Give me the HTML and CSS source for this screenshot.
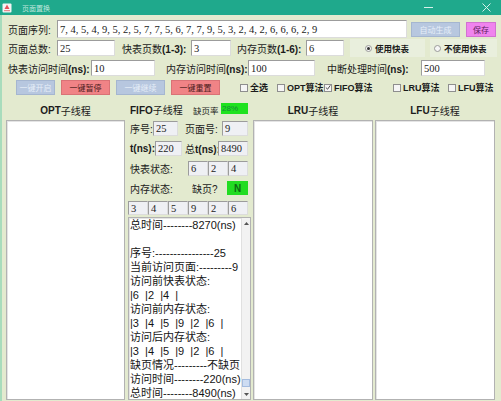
FILE: index.html
```html
<!DOCTYPE html>
<html lang="zh">
<head>
<meta charset="utf-8">
<title>页面置换</title>
<link rel="stylesheet" href="styles.css">
</head>
<body>
<div class="window">
  <div class="titlebar">
    <svg class="app-icon" width="10" height="10" viewBox="0 0 10 10">
      <rect x="0.5" y="0.5" width="9" height="9" rx="1" fill="#f4f4f4"/>
      <path d="M5 1.5 L7.5 6 L2.5 6 Z" fill="#e4505a"/>
      <rect x="2" y="7" width="6" height="1.2" fill="#e88a90"/>
    </svg>
    <span class="title">页面置换</span>
    <svg class="tb-min" width="9" height="9" viewBox="0 0 9 9"><path d="M0 4.5 H9" stroke="#d6f0ea" stroke-width="1"/></svg>
    <svg class="tb-close" width="9" height="9" viewBox="0 0 9 9"><path d="M0.5 0.5 L8.5 8.5 M8.5 0.5 L0.5 8.5" stroke="#d6f0ea" stroke-width="1"/></svg>
  </div>

  <div class="content">
    <div class="row r1">
      <span class="lbl w49">页面序列:</span>
      <div class="field w350">7, 4, 5, 4, 9, 5, 2, 5, 7, 7, 5, 6, 7, 7, 9, 5, 3, 2, 4, 2, 6, 6, 6, 2, 9</div>
      <div class="btn btn-dis ml4 w49 h15">自动生成</div>
      <div class="btn btn-save ml6 w30 h15">保存</div>
    </div>

    <div class="row r2">
      <span class="lbl w49">页面总数:</span>
      <div class="field w58">25</div>
      <span class="lbl ml7 w69">快表页数<span class="lat">(1-3):</span></span>
      <div class="field w40">3</div>
      <span class="lbl ml6 w69">内存页数<span class="lat">(1-6):</span></span>
      <div class="field w38">6</div>
      <div class="radio ml6 w75"><span class="dot on"></span>使用快表</div>
      <div class="radio radio2 ml5 w67"><span class="dot"></span>不使用快表</div>
    </div>

    <div class="row r3">
      <span class="lbl w83">快表访问时间<span class="lat">(ns):</span></span>
      <div class="field w64">10</div>
      <span class="lbl ml11 w82">内存访问时间<span class="lat">(ns):</span></span>
      <div class="field w67">100</div>
      <span class="lbl ml12 w94">中断处理时间<span class="lat">(ns):</span></span>
      <div class="field w64">500</div>
    </div>

    <div class="row r4">
      <div class="btn btn-dis ml8 w39">一键开启</div>
      <div class="btn btn-red ml6 w49">一键暂停</div>
      <div class="btn btn-dis ml6 w49">一键继续</div>
      <div class="btn btn-red ml6 w49">一键重置</div>
      <div class="chk ml20 w37"><span class="box"></span>全选</div>
      <div class="chk w47"><span class="box"></span>OPT算法</div>
      <div class="chk w69"><span class="box checked"><svg width="7" height="7" viewBox="0 0 7 7"><path d="M1 3.5 L3 5.5 L6.2 1" fill="none" stroke="#333" stroke-width="1"/></svg></span>FIFO算法</div>
      <div class="chk w55"><span class="box"></span>LRU算法</div>
      <div class="chk"><span class="box"></span>LFU算法</div>
    </div>

    <div class="cols">
      <div class="col">
        <div class="col-head"><span class="lat">OPT</span>子线程</div>
        <div class="ta"></div>
      </div>

      <div class="col fifo">
        <div class="fifo-head">
          <span class="lbl w63"><span class="lat">FIFO</span>子线程</span>
          <span class="lbl small w28">缺页率</span>
          <span class="rate">28%</span>
        </div>
        <div class="frow fa">
          <span class="lbl w23">序号:</span>
          <div class="field gray w25">25</div>
          <span class="lbl ml7 w37">页面号:</span>
          <div class="field gray w26">9</div>
        </div>
        <div class="frow fb">
          <span class="lbl w25"><span class="lat">t(ns):</span></span>
          <div class="field gray w27">220</div>
          <span class="lbl ml3 w33">总<span class="lat">t(ns):</span></span>
          <div class="field gray w30">8490</div>
        </div>
        <div class="frow fc">
          <span class="lbl w58">快表状态:</span>
          <div class="cell">6</div><div class="cell">2</div><div class="cell">4</div>
        </div>
        <div class="frow fd">
          <span class="lbl w62">内存状态:</span>
          <span class="lbl w35">缺页?</span>
          <span class="miss">N</span>
        </div>
        <div class="frow fe">
          <div class="cell">3</div><div class="cell">4</div><div class="cell">5</div><div class="cell">9</div><div class="cell">2</div><div class="cell">6</div>
        </div>
        <div class="ta log-ta">
          <div class="log">总时间--------8270(ns)

序号:----------------25
当前访问页面:---------9
访问前快表状态:
|6  |2  |4  |
访问前内存状态:
|3  |4  |5  |9  |2  |6  |
访问后内存状态:
|3  |4  |5  |9  |2  |6  |
缺页情况---------不缺页
访问时间--------220(ns)
总时间--------8490(ns)</div>
          <div class="sb">
            <div class="sb-btn"><svg width="5" height="3" viewBox="0 0 5 3"><path d="M0 3 L2.5 0 L5 3 Z" fill="#555"/></svg></div>
            <div class="sb-track"><div class="sb-thumb"></div></div>
            <div class="sb-btn down"><svg width="5" height="3" viewBox="0 0 5 3"><path d="M0 0 L2.5 3 L5 0 Z" fill="#555"/></svg></div>
          </div>
        </div>
      </div>

      <div class="col">
        <div class="col-head"><span class="lat">LRU</span>子线程</div>
        <div class="ta"></div>
      </div>

      <div class="col">
        <div class="col-head"><span class="lat">LFU</span>子线程</div>
        <div class="ta"></div>
      </div>
    </div>
  </div>
</div>
</body>
</html>
```

FILE: styles.css
```css
* { box-sizing: border-box; }
html, body { margin: 0; padding: 0; }
body {
  width: 501px;
  height: 401px;
  overflow: hidden;
  background: #e3eacf;
  font-family: "Liberation Sans", "Noto Sans CJK SC", sans-serif;
  color: #1b1b1b;
}
.window {
  width: 501px;
  height: 401px;
  display: flex;
  flex-direction: column;
  background: #e3eacf;
  overflow: hidden;
}

/* title bar */
.titlebar {
  height: 15px;
  flex: none;
  background: #1fa98c;
  display: flex;
  align-items: center;
}
.app-icon { margin-left: 2px; flex: none; }
.title {
  margin-left: 10px;
  font-size: 7px;
  color: #bfe6dc;
  font-family: "Noto Sans CJK SC", sans-serif;
  flex: 1;
}
.tb-min { margin-right: 49px; }
.tb-close { margin-right: 10px; }

.content {
  flex: 1;
  display: flex;
  flex-direction: column;
  box-shadow: inset 2px 0 0 #a8dcbc;
}

/* generic rows */
.row { display: flex; align-items: center; padding-left: 8px; flex: none; }
.r1 { margin-top: 5px; height: 18px; }
.r2 { margin-top: 2px; height: 16px; }
.r3 { margin-top: 4px; height: 16px; }
.r4 { margin-top: 4px; height: 15px; padding-left: 8px; }

.lbl {
  font-size: 10px;
  white-space: nowrap;
  flex: none;
  color: #1b1b1b;
}
.lat { font-family: "Liberation Sans", sans-serif; font-weight: bold; font-size: 10px; }
.lbl.small { font-size: 8.5px; }

.field {
  height: 100%;
  flex: none;
  background: #fff;
  border: 1px solid;
  border-color: #9c9c9c #dcdcdc #dcdcdc #9c9c9c;
  font-family: "Liberation Serif", serif;
  font-size: 10.5px;
  color: #222;
  padding-left: 2px;
  display: flex;
  align-items: center;
  white-space: nowrap;
  overflow: hidden;
}
.field.gray { background: #eff0f4; }

.btn {
  height: 15px;
  flex: none;
  font-family: "Noto Sans CJK SC", sans-serif;
  font-size: 8px;
  display: flex;
  align-items: center;
  justify-content: center;
  border: 1px solid;
}
.h15 { height: 15px; }
.btn-dis { background: #b7c7df; border-color: #a5b6d0; color: #e6eef8; }
.btn-red { background: #f08386; border-color: #d97276; color: #4c1b1b; }
.btn-save { background: #f083ee; border-color: #d272d2; color: #5c215c; }

.radio {
  height: 18px;
  flex: none;
  background: #e9efdd;
  display: flex;
  align-items: center;
  font-size: 8.5px;
  font-weight: bold;
  padding-left: 15px;
  white-space: nowrap;
}
.radio2 { padding-left: 4px; }
.dot {
  width: 7px;
  height: 7px;
  border-radius: 50%;
  border: 1px solid #9a9a9a;
  background: #f6f6f6;
  margin-right: 3px;
  display: flex;
  align-items: center;
  justify-content: center;
}
.dot.on::after {
  content: "";
  width: 3px;
  height: 3px;
  border-radius: 50%;
  background: #333;
}

.chk {
  display: flex;
  align-items: center;
  font-size: 9px;
  font-weight: bold;
  white-space: nowrap;
  flex: none;
}
.box {
  width: 8px;
  height: 8px;
  border: 1px solid #8e8e8e;
  background: #f5f5f5;
  margin-right: 2px;
  display: flex;
  align-items: center;
  justify-content: center;
}

/* widths / margins */
.w23 { width: 23px; } .w25 { width: 25px; } .w26 { width: 26px; } .w27 { width: 27px; }
.w28 { width: 28px; } .w30 { width: 30px; } .w33 { width: 33px; } .w35 { width: 35px; }
.w37 { width: 37px; } .w38 { width: 38px; } .w39 { width: 39px; } .w40 { width: 40px; }
.w47 { width: 47px; } .w49 { width: 49px; } .w55 { width: 55px; } .w58 { width: 58px; }
.w62 { width: 62px; } .w63 { width: 63px; } .w64 { width: 64px; } .w67 { width: 67px; }
.w69 { width: 69px; } .w75 { width: 75px; } .w82 { width: 82px; } .w83 { width: 83px; }
.w94 { width: 94px; } .w350 { width: 350px; }
.ml3 { margin-left: 3px; } .ml4 { margin-left: 4px; } .ml5 { margin-left: 5px; }
.ml6 { margin-left: 6px; } .ml7 { margin-left: 7px; } .ml8 { margin-left: 8px; }
.ml11 { margin-left: 11px; } .ml12 { margin-left: 12px; } .ml20 { margin-left: 20px; }

/* columns */
.cols {
  margin-top: 3px;
  height: 302px;
  flex: none;
  display: grid;
  grid-template-columns: 119px 124px 120px 120px;
  column-gap: 2px;
  padding-left: 6px;
}
.col { display: flex; flex-direction: column; min-height: 0; }
.col-head {
  height: 22px;
  flex: none;
  padding-top: 3px;
  display: flex;
  align-items: center;
  justify-content: center;
  font-size: 10px;
  white-space: nowrap;
}
.ta {
  flex: 1;
  background: #fff;
  border: 1px solid #b2b2b2;
  box-shadow: inset 1px 1px 0 #e4e4e4;
}

/* FIFO column */
.fifo-head {
  height: 22px;
  flex: none;
  display: flex;
  align-items: center;
  padding-left: 3px;
  padding-top: 1px;
}
.rate {
  width: 27px;
  height: 11px;
  background: #1fe21f;
  color: #178a3a;
  font-size: 8px;
  display: flex;
  align-items: center;
  padding-left: 1px;
  margin-bottom: 2px;
}
.frow { display: flex; align-items: center; padding-left: 3px; flex: none; }
.fa { margin-top: 1px; height: 15px; }
.fb { margin-top: 5px; height: 15px; }
.fc { margin-top: 5px; height: 15px; }
.fd { margin-top: 5px; height: 14px; }
.fe { margin-top: 6px; height: 14px; padding-left: 1px; }
.cell {
  width: 20px;
  height: 100%;
  flex: none;
  background: #eff0f4;
  border: 1px solid;
  border-color: #9c9c9c #dcdcdc #dcdcdc #9c9c9c;
  font-family: "Liberation Serif", serif;
  font-size: 10.5px;
  color: #222;
  padding-left: 2px;
  display: flex;
  align-items: center;
}
.miss {
  width: 21px;
  height: 100%;
  background: #22dc22;
  color: #0d6a12;
  font-weight: bold;
  font-size: 10px;
  display: flex;
  align-items: center;
  justify-content: center;
}
.log-ta {
  margin-top: 2px;
  margin-left: 1px;
  display: flex;
  overflow: hidden;
}
.log {
  flex: 1;
  white-space: pre;
  font-size: 11px;
  line-height: 14px;
  padding-left: 1px;
  overflow: hidden;
  color: #141414;
}
.sb {
  width: 9px;
  flex: none;
  background: #f2f2f2;
  border-left: 1px solid #e0e0e0;
  display: flex;
  flex-direction: column;
}
.sb-btn {
  height: 10px;
  flex: none;
  display: flex;
  align-items: center;
  justify-content: center;
}
.sb-track {
  flex: 1;
  display: flex;
  flex-direction: column;
  justify-content: flex-end;
  padding-bottom: 2px;
}
.sb-thumb {
  height: 8px;
  background: #cddcf2;
  border: 1px solid #a4bcdf;
}
```
